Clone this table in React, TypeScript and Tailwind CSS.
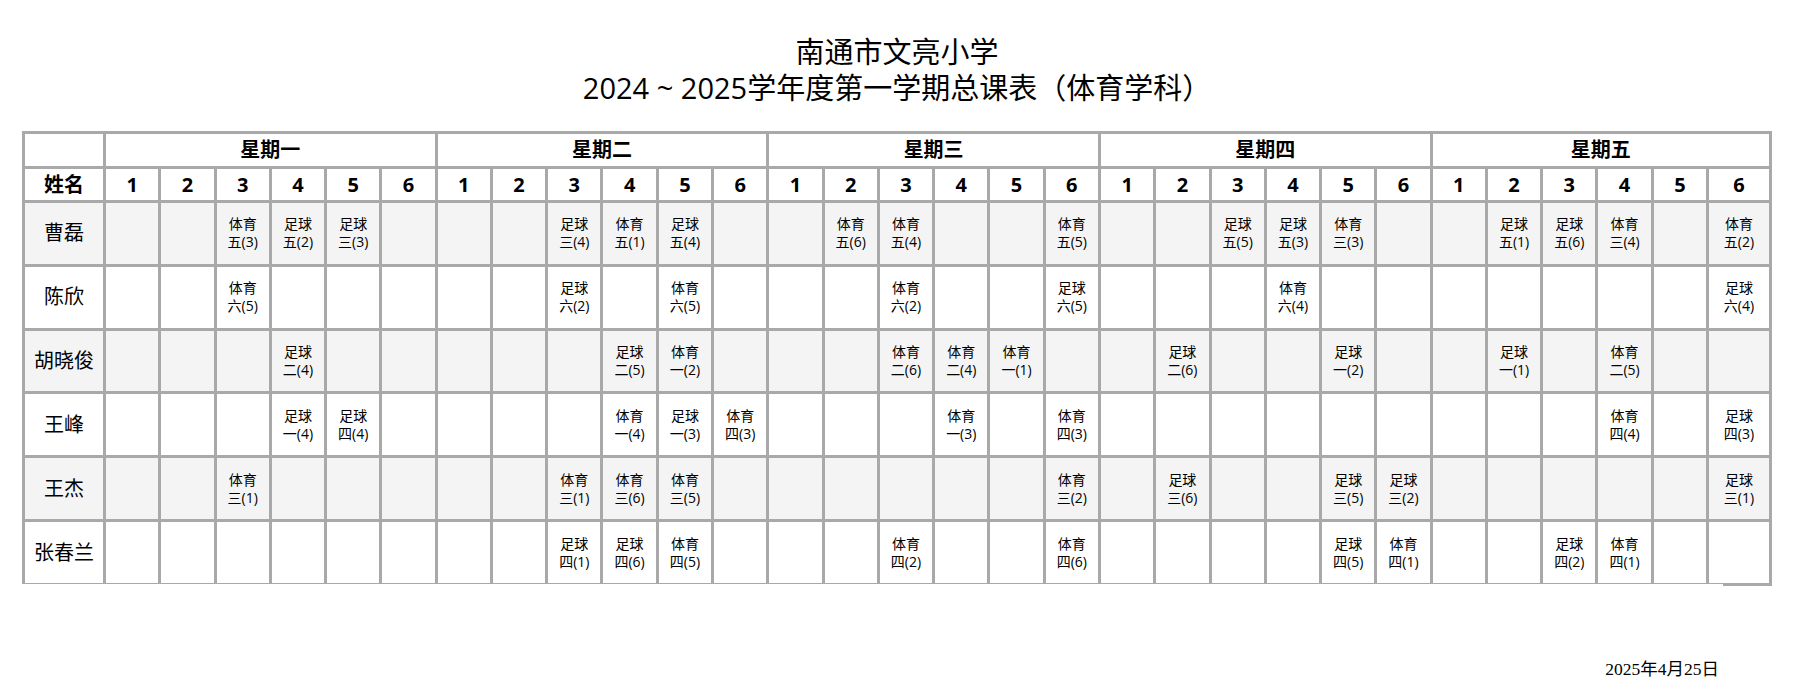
import React from "react";

type RowData = { name: string; cells: Record<number, string> };

const rows: RowData[] = [
  {
    name: "曹磊",
    cells: {
      2: "体育 五(3)", 3: "足球 五(2)", 4: "足球 三(3)",
      8: "足球 三(4)", 9: "体育 五(1)", 10: "足球 五(4)",
      13: "体育 五(6)", 14: "体育 五(4)", 17: "体育 五(5)",
      20: "足球 五(5)", 21: "足球 五(3)", 22: "体育 三(3)",
      25: "足球 五(1)", 26: "足球 五(6)", 27: "体育 三(4)", 29: "体育 五(2)",
    },
  },
  {
    name: "陈欣",
    cells: {
      2: "体育 六(5)", 8: "足球 六(2)", 10: "体育 六(5)", 14: "体育 六(2)",
      17: "足球 六(5)", 21: "体育 六(4)", 29: "足球 六(4)",
    },
  },
  {
    name: "胡晓俊",
    cells: {
      3: "足球 二(4)", 9: "足球 二(5)", 10: "体育 一(2)", 14: "体育 二(6)",
      15: "体育 二(4)", 16: "体育 一(1)", 19: "足球 二(6)", 22: "足球 一(2)",
      25: "足球 一(1)", 27: "体育 二(5)",
    },
  },
  {
    name: "王峰",
    cells: {
      3: "足球 一(4)", 4: "足球 四(4)", 9: "体育 一(4)", 10: "足球 一(3)",
      11: "体育 四(3)", 15: "体育 一(3)", 17: "体育 四(3)", 27: "体育 四(4)",
      29: "足球 四(3)",
    },
  },
  {
    name: "王杰",
    cells: {
      2: "体育 三(1)", 8: "体育 三(1)", 9: "体育 三(6)", 10: "体育 三(5)",
      17: "体育 三(2)", 19: "足球 三(6)", 22: "足球 三(5)", 23: "足球 三(2)",
      29: "足球 三(1)",
    },
  },
  {
    name: "张春兰",
    cells: {
      8: "足球 四(1)", 9: "足球 四(6)", 10: "体育 四(5)", 14: "体育 四(2)",
      17: "体育 四(6)", 22: "足球 四(5)", 23: "体育 四(1)", 26: "足球 四(2)",
      27: "体育 四(1)",
    },
  },
];

const days = ["星期一", "星期二", "星期三", "星期四", "星期五"];
const periods = [1, 2, 3, 4, 5, 6];

export default function App() {
  return (
    <div
      className="w-[1802px] h-[697px] bg-white text-black"
      style={{ fontFamily: '"Open Sans", "Noto Sans CJK SC", sans-serif' }}
    >
      <div className="ml-[22px] w-[1750px]">
        <div className="pt-[34px] text-center text-[29px] leading-[36px]">
          <div>南通市文亮小学</div>
          <div>2024 ~ 2025学年度第一学期总课表（体育学科）</div>
        </div>

        <div className="mt-[25px] grid h-[453px] w-[1750px] grid-cols-[78px_repeat(29,minmax(0,1fr))_60px] grid-rows-[32px_31px_repeat(6,minmax(0,1fr))] gap-[3px] bg-[#a9a9a9] px-[3px] pt-[3px] pb-[1px]">
          <div className="bg-white" />
          {days.map((d) => (
            <div
              key={d}
              className="col-span-6 flex items-center justify-center bg-white text-[20px] font-bold"
            >
              {d}
            </div>
          ))}

          <div className="flex items-center justify-center bg-white text-[20px] font-bold">
            姓名
          </div>
          {days.map((d) =>
            periods.map((p) => (
              <div
                key={d + p}
                className="flex items-center justify-center bg-white text-[20px] font-bold"
              >
                {p}
              </div>
            ))
          )}

          {rows.map((r, ri) => {
            const bg = ri % 2 === 0 ? "bg-[#f4f4f4]" : "bg-white";
            return (
              <React.Fragment key={r.name}>
                <div className={`flex items-center justify-center text-[20px] ${bg}`}>
                  {r.name}
                </div>
                {Array.from({ length: 30 }).map((_, ci) => {
                  const v = r.cells[ci];
                  const [a, b] = v ? v.split(" ") : ["", ""];
                  return (
                    <div
                      key={ci}
                      className={`flex flex-col items-center justify-center text-[14px] leading-[18px] ${bg}`}
                    >
                      {v ? (
                        <>
                          <span>{a}</span>
                          <span>{b}</span>
                        </>
                      ) : null}
                    </div>
                  );
                })}
              </React.Fragment>
            );
          })}
        </div>
        <div className="flex justify-end">
          <div className="-mt-px h-[3px] w-[49px] bg-[#a9a9a9]" />
        </div>

        <div className="mt-[73px] flex justify-end pr-[53px]">
          <span
            className="text-[17.5px] leading-[20px]"
            style={{ fontFamily: '"Liberation Serif", "Noto Sans CJK SC", serif' }}
          >
            2025年4月25日
          </span>
        </div>
      </div>
    </div>
  );
}
